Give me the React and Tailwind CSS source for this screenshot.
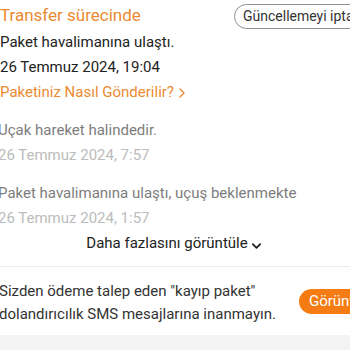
import React from 'react';

const Chevron = ({ className }) => (
    <svg viewBox="0 0 6 10" className={className} fill="none" stroke="currentColor" strokeWidth="1.4" strokeLinecap="round" strokeLinejoin="round">
        <path d="M1 1l4 4-4 4" />
    </svg>
);

const ChevronDown = ({ className }) => (
    <svg viewBox="0 0 12 8" className={className} fill="none" stroke="currentColor" strokeWidth="2" strokeLinecap="round" strokeLinejoin="round">
        <path d="M2 2l4 4 4-4" />
    </svg>
);

const events = [
    { text: "Uçak hareket halindedir.", date: "26 Temmuz 2024, 7:57" },
    { text: "Paket havalimanına ulaştı, uçuş beklenmekte", date: "26 Temmuz 2024, 1:57" },
];

export default function App() {
    return (
        <div className="w-[350px] h-[350px] overflow-hidden bg-white font-['Roboto',sans-serif] text-[15px] text-[#222]">
            {/* Current status */}
            <div className="flex items-start pt-[3px]">
                <div className="w-[234px] flex-none whitespace-nowrap text-[17px] leading-[25px] text-[#eb8a31]">
                    Transfer sürecinde
                </div>
                <button className="flex-none h-[25px] mt-[1px] px-2 rounded-full border border-[#8f8f8f] text-[14px] leading-[23px] text-[#333] whitespace-nowrap">
                    Güncellemeyi iptal et
                </button>
            </div>
            <div className="leading-[25px] mt-[1px]">
                <div className="whitespace-nowrap">Paket havalimanına ulaştı.</div>
                <div className="whitespace-nowrap">26 Temmuz 2024, 19:04</div>
                <div className="flex items-center gap-[5px] text-[#eb8a31] whitespace-nowrap">
                    Paketiniz Nasıl Gönderilir?
                    <Chevron className="w-[6px] h-[10px]" />
                </div>
            </div>

            {/* Timeline */}
            <div className="-ml-[2px] mt-[13px] flex flex-col gap-[13px] leading-[25px]">
                {events.map((e) => (
                    <div key={e.date}>
                        <div className="whitespace-nowrap text-[#7d7d7d]">{e.text}</div>
                        <div className="whitespace-nowrap text-[#bcbcbc]">{e.date}</div>
                    </div>
                ))}
            </div>

            <div className="flex items-center justify-center gap-[3px] leading-[25px] text-[#222] -ml-[2px]">
                Daha fazlasını görüntüle
                <ChevronDown className="w-[11px] h-[8px] mt-[4px]" />
            </div>

            <div className="mt-[10px] h-px bg-[#ececec]" />

            {/* Scam warning */}
            <div className="flex items-center h-[68px] -ml-[1px]">
                <div className="w-[300px] flex-none mt-[4px] leading-[23px] text-[#333]">
                    <div className="whitespace-nowrap">Sizden ödeme talep eden "kayıp paket"</div>
                    <div className="whitespace-nowrap">dolandırıcılık SMS mesajlarına inanmayın.</div>
                </div>
                <button className="flex-none h-[25px] mt-[1px] px-[10px] rounded-full bg-[#f57c12] text-white text-[15px] leading-[25px] whitespace-nowrap">
                    Görüntüle
                </button>
            </div>
            <div className="h-[20px] bg-[#f3f3f3]" />
        </div>
    );
}
